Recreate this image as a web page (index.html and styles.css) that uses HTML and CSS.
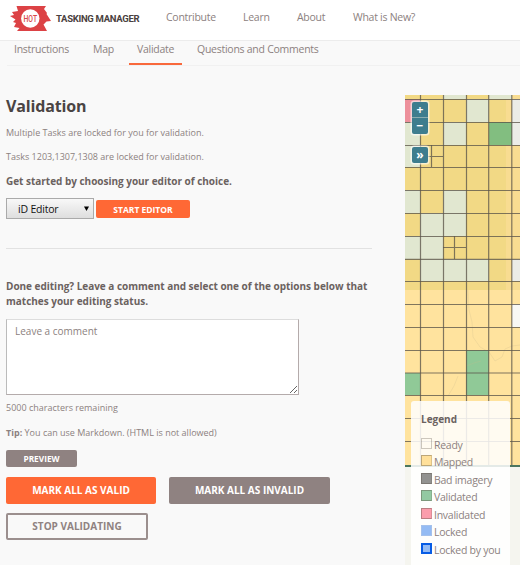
FILE: index.html
```html
<!DOCTYPE html>
<html lang="en">
<head>
<meta charset="utf-8">
<title>Tasking Manager</title>
<link rel="stylesheet" href="styles.css">
</head>
<body>
<header class="header">
  <svg class="logo" width="42" height="26" viewBox="0 0 42 26">
    <path fill="#dc4245" d="M6.500 0H36L34 3L37 7L36.500 8L41 15L36.500 15.500L33.500 18.500L37 25H7L9.500 22L4 21L6 17L3 16L5.500 13.500L0 10L4 9L2 6L8 5Z"/>
    <circle cx="20.300" cy="12.500" r="9.200" fill="#fff"/>
    <text x="20.300" y="15.900" text-anchor="middle" textLength="13.500" lengthAdjust="spacingAndGlyphs" class="hot">HOT</text>
  </svg>
  <span class="brand">TASKING MANAGER</span>
  <nav class="nav"><a class="n1">Contribute</a><a class="n2">Learn</a><a class="n3">About</a><a class="n4">What is New?</a></nav>
</header>
<nav class="tabs"><a class="t1">Instructions</a><a class="t2">Map</a><a class="t3 active">Validate</a><a class="t4">Questions and Comments</a></nav>
<div class="content">
  <main class="panel">
    <h1>Validation</h1>
    <p class="p1">Multiple Tasks are locked for you for validation.</p>
    <p class="p2">Tasks 1203,1307,1308 are locked for validation.</p>
    <p class="strong started">Get started by choosing your editor of choice.</p>
    <div class="editor"><div class="select"><span>iD Editor</span><svg width="5" height="5" viewBox="0 0 5 5"><path d="M0 .5H5L2.500 5Z"/></svg></div><button class="btn start"><span>START EDITOR</span></button></div>
    <hr>
    <p class="strong done">Done editing? Leave a comment and select one of the options below that<br>matches your editing status.</p>
    <textarea placeholder="Leave a comment"></textarea>
    <p class="remaining">5000 characters remaining</p>
    <p class="tip"><b>Tip:</b> You can use Markdown. (HTML is not allowed)</p>
    <button class="btn preview"><span>PREVIEW</span></button>
    <div class="actions"><button class="btn valid"><span>MARK ALL AS VALID</span></button><button class="btn invalid"><span>MARK ALL AS INVALID</span></button></div>
    <button class="btn stop"><span>STOP VALIDATING</span></button>
  </main>
  <aside class="map">
    <svg class="tiles" width="115" height="470" viewBox="405 95 115 470">
      <rect x="405" y="95" width="115" height="470" fill="#f5f5ef"/>
      <rect x="405" y="95" width="115" height="371" fill="#ffe39e"/>
      <rect x="405" y="95" width="115" height="195" fill="#f8dc91"/>
      <rect x="405" y="95" width="101" height="195" fill="#f2d985"/>
      <g fill="#e1e7d0">
        <path d="M443 95h23v4h-23zM489 95h23v4h-23zM466 99h23v23h-23zM405 122h15v45h-15zM443 122h23v23h-23zM405 190h15v23h-15zM443 190h23v23h-23zM420 213h46v23h-46zM405 236h38v23h-38zM420 259h69v22h-69z"/>
      </g>
      <path fill="#ed909b" d="M405 99h15v23h-15z"/>
      <path fill="#ebece7" d="M512 99h8v46h-8zM512 259h8v22h-8z"/>
      <path fill="#f8f8f5" d="M512 304h8v23h-8z"/>
      <path fill="#82be80" d="M489 122h23v23h-23z"/>
      <path fill="#90c997" d="M466 350h23v45h-23zM405 373h15v22h-15z"/>
      <g fill="none" stroke="#c9b98c" stroke-opacity=".35" stroke-width=".7"><path d="M468 290l1 20l3 12l1 15l7 10l9 5l6 9l7-4l3-8l7-3l8-1M458 376l-4 10l-6 10M466 366l8-3l7-2"/></g>
      <g fill="none" stroke="#5c564a" stroke-opacity=".78" stroke-width="1.200">
        <path d="M420.500 95V466M443.500 95V466M466.500 95V466M488.700 95V466M511.800 95V466"/>
        <path d="M405 99.500H520M405 122.500H520M405 145.500H520M405 167.500H520M405 190.500H520M405 213.500H520M405 236.500H520M405 259.400H520M405 281.500H520M405 304.500H520M405 327.500H520M405 350.500H520M405 373H520M405 395.500H520M405 418.500H520M405 441.500H520"/>
        <path d="M431.500 145V167M420 156.500H443M454.500 236V259M443 247.500H466"/>
      </g>
      <path stroke="#4b765f" stroke-width="2" d="M405 466H520"/>
    </svg>
    <div class="zoom"><span class="in">+</span><span class="out">−</span></div>
    <div class="expand">»</div>
    <section class="legend">
      <h2>Legend</h2>
      <ul>
        <li><i class="ready"></i>Ready</li>
        <li><i class="mapped"></i>Mapped</li>
        <li><i class="bad"></i>Bad imagery</li>
        <li><i class="validated"></i>Validated</li>
        <li><i class="invalidated"></i>Invalidated</li>
        <li><i class="locked"></i>Locked</li>
        <li><i class="mine"></i>Locked by you</li>
      </ul>
    </section>
  </aside>
</div>
</body>
</html>
```
FILE: styles.css
```css
* { box-sizing: border-box; }
body { margin: 0; width: 520px; height: 565px; overflow: hidden; background: #f9f9f9; color: #8c8180; font-family: "Open Sans", "Noto Sans", sans-serif; font-size: 9px; }
a { white-space: nowrap; }
p, h1, h2, ul { margin: 0; padding: 0; white-space: nowrap; }
.header { height: 41px; background: #fff; border-bottom: 1px solid #ececec; display: flex; padding-left: 10px; }
.logo { margin-top: 6px; flex: none; }
.hot { font: 500 8.5px Roboto, sans-serif; fill: #d9484a; }
.brand { margin: 11px 0 0 4px; width: 110px; font: 700 9.5px/15px Roboto, sans-serif; letter-spacing: -.3px; color: #4a4140; white-space: nowrap; }
.nav { display: flex; font-size: 10.5px; line-height: 16px; padding-top: 9px; letter-spacing: -.27px; }
.n1 { width: 77px; }
.n2 { width: 54px; }
.n3 { width: 56px; }
.tabs { height: 25px; border-bottom: 1px solid #f1f1f1; margin-left: 7px; padding-left: 7px; display: flex; font-size: 10.5px; line-height: 16px; letter-spacing: -.26px; }
.t1 { width: 79px; }
.t2 { width: 36px; }
.t3 { width: 53px; padding-left: 8px; margin-right: 15px; }
.active { height: 24px; border-bottom: 2px solid #f9693c; }
.content { display: flex; height: 499px; }
.panel { flex: none; width: 405px; padding: 29px 0 0 6px; }
h1 { font-size: 16px; line-height: 22px; letter-spacing: -.15px; color: #4a4443; }
.p1 { margin-top: 10px; line-height: 12px; }
.p2 { margin-top: 12px; line-height: 12px; }
.strong { font-weight: 700; font-size: 10px; line-height: 15px; letter-spacing: -.02px; color: #6b625f; }
.started { margin-top: 11px; }
.editor { display: flex; margin-top: 9px; height: 21px; }
.select { width: 88px; height: 21px; border: 1px solid #aaa; background: linear-gradient(#f8f8f8, #dedede); display: flex; justify-content: space-between; align-items: center; padding: 0 4px 0 11px; color: #111; font-size: 10.5px; letter-spacing: -.2px; }
.btn { border: 0; border-radius: 2px; color: #fff; font: 700 8px "Open Sans", sans-serif; padding: 0; display: flex; align-items: center; justify-content: center; white-space: nowrap; }
.start { width: 94px; height: 18px; margin: 2px 0 0 2px; background: #ff6835; font-size: 8.5px; }
hr { border: 0; border-top: 1px solid #e2e2e2; margin: 29px 33px 0 0; }
.done { margin-top: 30px; }
textarea { display: block; width: 293px; height: 76px; margin-top: 10px; padding: 4px 8px; border: 1px solid #b4abab; border-top-color: #ddd; border-left-color: #bbb; border-radius: 0; background: #fff; font: 10px/14px "Open Sans", sans-serif; }
textarea::placeholder { color: #8c8180; }
.remaining { margin-top: 7px; line-height: 12px; }
.tip { margin-top: 13px; line-height: 12px; }
.preview { width: 71px; height: 17px; margin-top: 11px; background: #8f8281; font-size: 8.3px; }
.actions { display: flex; gap: 13px; margin-top: 10px; }
.valid, .invalid, .stop { height: 27px; font-size: 10px; }
.valid span, .invalid span, .stop span { position: relative; top: -1px; }
.valid { width: 150px; background: #ff6835; }
.invalid { width: 161px; background: #8f8281; }
.stop { width: 142px; margin-top: 9px; color: #8f8281; background: transparent; border: 2px solid #9b8f8e; }
.map { position: relative; flex: none; width: 115px; padding-top: 29px; }
.tiles { display: block; }
.zoom, .expand { position: absolute; left: 7px; width: 16px; border-radius: 2px; box-shadow: 0 0 0 1.500px rgba(255,255,255,.6); background: #3e7d8e; color: #fff; font: 700 12px/15px "Open Sans", sans-serif; text-align: center; }
.zoom { top: 36px; height: 32px; }
.zoom span { display: block; height: 16px; }
.in { border-bottom: 1px solid #8badb0; }
.expand { top: 81px; height: 16px; line-height: 15px; }
.legend { position: absolute; left: 6px; top: 335px; width: 99px; height: 170px; border-radius: 3px; background: rgba(255,255,255,.85); padding: 11px 0 0 10px; }
h2 { font-size: 10px; line-height: 14px; color: #6b625f; }
ul { list-style: none; margin-top: 11px; }
li { display: flex; height: 17.450px; line-height: 17px; font-size: 10.5px; letter-spacing: -.26px; }
i { width: 11px; height: 11px; margin: 1px 2px 0 0; border: 1px solid rgba(90,80,70,.4); border-right-color: rgba(90,80,70,.2); }
.ready { border-color: rgba(90,80,70,.3); }
.mapped { background: #ffe09a; }
.bad { background: #929290; }
.validated { background: #93c9a2; }
.invalidated { background: #fb9dac; }
.locked { background: #94bbf4; border-color: #a5c1eb; }
.mine { background: #94bbf4; border: 2px solid #075ce5; }
```
